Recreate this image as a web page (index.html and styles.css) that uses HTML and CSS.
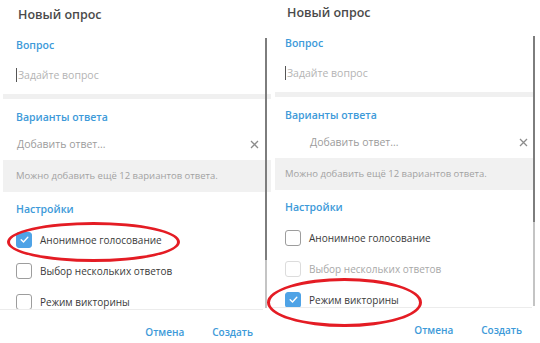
FILE: index.html
```html
<!DOCTYPE html>
<html lang="ru">
<head>
    <meta charset="UTF-8">
    <meta name="viewport" content="width=device-width, initial-scale=1.0">
    <title>Новый опрос</title>
    <link rel="stylesheet" href="styles.css">
</head>
<body>
    <div class="screens">
        <div class="panel panel-left">
            <div class="head">Новый опрос</div>
            <div class="body">
                <div class="section-title">Вопрос</div>
                <div class="question"><span class="caret"></span>Задайте вопрос</div>
                <div class="band"></div>
                <div class="section-title">Варианты ответа</div>
                <div class="answer">
                    <span>Добавить ответ...</span>
                    <svg class="remove" width="9" height="9" viewBox="0 0 9 9"><path d="M1 1L8 8M8 1L1 8" stroke="#8c8c8c" stroke-width="1.3"/></svg>
                </div>
                <div class="hint">Можно добавить ещё 12 вариантов ответа.</div>
                <div class="section-title settings">Настройки</div>
                <div class="option"><span class="box checked"></span>Анонимное голосование</div>
                <div class="option"><span class="box"></span>Выбор нескольких ответов</div>
                <div class="option"><span class="box"></span>Режим викторины</div>
            </div>
            <div class="foot">
                <span class="btn">Отмена</span>
                <span class="btn">Создать</span>
            </div>
            <div class="scrollbar"><div class="thumb"></div></div>
            <div class="mark mark-left"></div>
        </div>
        <div class="panel panel-right">
            <div class="head">Новый опрос</div>
            <div class="body">
                <div class="section-title">Вопрос</div>
                <div class="question"><span class="caret"></span>Задайте вопрос</div>
                <div class="band"></div>
                <div class="section-title">Варианты ответа</div>
                <div class="answer">
                    <span>Добавить ответ...</span>
                    <svg class="remove" width="9" height="9" viewBox="0 0 9 9"><path d="M1 1L8 8M8 1L1 8" stroke="#8c8c8c" stroke-width="1.3"/></svg>
                </div>
                <div class="hint">Можно добавить ещё 12 вариантов ответа.</div>
                <div class="section-title settings">Настройки</div>
                <div class="option"><span class="box"></span>Анонимное голосование</div>
                <div class="option disabled"><span class="box"></span>Выбор нескольких ответов</div>
                <div class="option"><span class="box checked"></span>Режим викторины</div>
            </div>
            <div class="foot">
                <span class="btn">Отмена</span>
                <span class="btn">Создать</span>
            </div>
            <div class="scrollbar"><div class="thumb"></div></div>
            <div class="mark mark-right"></div>
        </div>
    </div>
</body>
</html>
```

FILE: styles.css
```css
* {
    box-sizing: border-box;
}
body {
    margin: 0;
    background: #fff;
    font-family: "Open Sans", "Liberation Sans", sans-serif;
    color: #3a3a3a;
}
.screens {
    display: flex;
    width: 540px;
    height: 343px;
    overflow: hidden;
}
.panel {
    position: relative;
    height: 343px;
    display: flex;
    flex-direction: column;
}
.panel-left {
    width: 271px;
    --pad: 16px;
    --band-l: 3px;
    --band-r: 0px;
    --answer-pad: 17px;
}
.panel-right {
    width: 269px;
    margin-top: -2px;
    --pad: 14px;
    --band-l: 4px;
    --band-r: 6px;
    --answer-pad: 39px;
}
.head {
    height: 30px;
    line-height: 30px;
    padding-left: calc(var(--pad) + 2px);
    font-size: 12.5px;
    font-weight: 600;
    color: #4a4a4a;
}
.body {
    height: 279px;
    flex-shrink: 0;
    overflow: hidden;
}
.section-title {
    height: 30px;
    line-height: 30px;
    padding-left: var(--pad);
    font-size: 10.5px;
    font-weight: 600;
    color: #3d9ad9;
}
.question {
    height: 29px;
    padding-left: var(--pad);
    font-size: 10.5px;
    color: #b4b4b4;
    display: flex;
    align-items: center;
}
.caret {
    width: 1px;
    height: 14px;
    background: #555;
    margin-right: 1px;
}
.band {
    height: 5px;
    margin: 5px var(--band-r) 3px var(--band-l);
    background: #f0f0f0;
}
.answer {
    height: 28px;
    padding: 0 12px 4px var(--answer-pad);
    display: flex;
    align-items: center;
    justify-content: space-between;
    font-size: 10.5px;
    color: #9c9c9c;
}
.hint {
    height: 32px;
    line-height: 32px;
    margin: 0 var(--band-r) 0 var(--band-l);
    padding-left: calc(var(--pad) - var(--band-l));
    background: #f1f1f1;
    font-size: 9.5px;
    color: #a2a2a2;
}
.settings {
    margin-top: 2px;
}
.option {
    height: 31px;
    padding-left: var(--pad);
    display: flex;
    align-items: center;
    font-size: 10px;
    color: #3a3a3a;
}
.box {
    width: 16px;
    height: 16px;
    border: 1.5px solid #9d9d9d;
    border-radius: 3px;
    margin-right: 8px;
    flex-shrink: 0;
}
.box.checked {
    border-color: #4fa3e6;
    background: #4fa3e6 url("data:image/svg+xml;utf8,<svg xmlns='http://www.w3.org/2000/svg' width='13' height='13' viewBox='0 0 13 13'><path d='M3.2 6.8L5.5 9L9.8 4.3' fill='none' stroke='white' stroke-width='1.4' stroke-linecap='round' stroke-linejoin='round'/></svg>") center no-repeat;
}
.option.disabled {
    color: #a8a8a8;
}
.option.disabled .box {
    border-color: #dcdcdc;
}
.foot {
    flex: 1;
    border-top: 1px solid #ececec;
    margin-right: 8px;
    display: flex;
    justify-content: flex-end;
    gap: 28px;
    padding: 12px 10px 0 0;
}
.btn {
    line-height: 20px;
    height: 20px;
    font-size: 10px;
    font-weight: 600;
    color: #3d9ad9;
}
.scrollbar {
    position: absolute;
    right: 4px;
    top: 38px;
    width: 2px;
    height: 270px;
    background: #c4c4c4;
}
.thumb {
    height: 222px;
    background: #7d7d7d;
}
.panel-right .scrollbar {
    right: 5px;
}
.panel-right .thumb {
    height: 186px;
}
.mark {
    position: absolute;
    border: 3.5px solid #e41c24;
    border-radius: 50%;
}
.mark-left {
    left: 7px;
    top: 222px;
    width: 173px;
    height: 40px;
}
.mark-right {
    left: -4px;
    top: 280px;
    width: 155px;
    height: 49px;
}
```
